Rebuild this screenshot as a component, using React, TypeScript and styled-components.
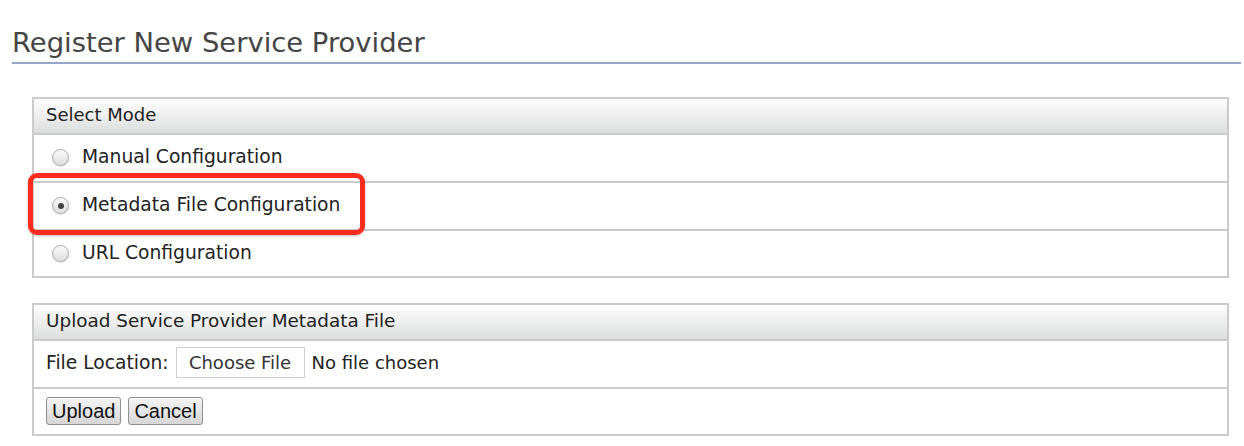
import React from "react";
import styled, { createGlobalStyle } from "styled-components";

const GlobalStyle = createGlobalStyle`
  html, body {
    margin: 0;
    padding: 0;
    background: #fff;
  }
  body {
    font-family: "DejaVu Sans", "Liberation Sans", sans-serif;
    color: #222;
  }
`;

const Page = styled.div`
  padding: 0 3px 0 12px;
`;

const Title = styled.h1`
  margin: 0;
  padding: 27px 0 4px 0;
  font-size: 27.4px;
  font-weight: normal;
  color: #454545;
  border-bottom: 2px solid #94a7c6;
  line-height: 31px;
`;

const Section = styled.div<{ $top: number }>`
  position: relative;
  margin: ${(p) => p.$top}px 12px 0 20px;
`;

const Table = styled.table`
  width: 100%;
  border-collapse: collapse;
  border: 2px solid #cbcbcb;
  font-size: 18.7px;
`;

const HeadCell = styled.th<{ $size: number }>`
  height: 31px;
  padding: 0 12px 3px 12px;
  text-align: left;
  font-weight: normal;
  font-size: ${(p) => p.$size}px;
  color: #222;
  background: linear-gradient(#fefefe, #dcdddd);
  border-bottom: 2px solid #cbcbcb;
`;

const Cell = styled.td<{ $h: number }>`
  height: ${(p) => p.$h}px;
  padding: 0 12px 3px 12px;
  border-top: 2px solid #cbcbcb;
  vertical-align: middle;
`;

const RadioLabel = styled.label`
  display: flex;
  align-items: center;
  gap: 13px;
  padding-left: 6px;
`;

const Radio = styled.span<{ $checked?: boolean }>`
  position: relative;
  width: 15px;
  height: 15px;
  margin-top: 2px;
  border-radius: 50%;
  border: 1px solid #a9a9a9;
  background: linear-gradient(#fbfbfb, #dedede);
  box-shadow: 0 1px 1px rgba(0, 0, 0, 0.12);
  flex: none;
  &::after {
    content: "";
    display: ${(p) => (p.$checked ? "block" : "none")};
    position: absolute;
    left: 4.5px;
    top: 4.5px;
    width: 6px;
    height: 6px;
    border-radius: 50%;
    background: #454545;
  }
`;

const Highlight = styled.div`
  position: absolute;
  left: -4px;
  top: 76px;
  width: 337px;
  height: 62px;
  box-sizing: border-box;
  border: 5px solid #fd2a1e;
  border-radius: 9px;
  box-shadow: 0 1px 3px rgba(0, 0, 0, 0.25);
  pointer-events: none;
`;

const FileRow = styled.div`
  display: flex;
  align-items: center;
  gap: 7px;
`;

const ChooseButton = styled.span`
  display: inline-flex;
  align-items: center;
  justify-content: center;
  width: 127px;
  height: 28px;
  padding-bottom: 1px;
  border: 1px solid #cfcfcf;
  background: #fff;
  color: #333;
  font-size: 18px;
`;

const FileName = styled.span`
  font-size: 18px;
`;

const Buttons = styled.div`
  display: flex;
  gap: 7px;
  padding-top: 2px;
`;

const Button = styled.button`
  font-family: "Liberation Sans", Arial, sans-serif;
  font-size: 20px;
  color: #111;
  height: 28px;
  padding: 0 5px;
  border: 1px solid #8e8e8e;
  border-radius: 3px;
  background: linear-gradient(#f4f4f4, #d6d6d6);
  box-shadow: inset 0 1px 0 #fff;
  line-height: 1;
`;

export default function App() {
  return (
    <Page>
      <GlobalStyle />
      <Title>Register New Service Provider</Title>

      <Section $top={33}>
        <Table>
          <thead>
            <tr>
              <HeadCell $size={18}>Select Mode</HeadCell>
            </tr>
          </thead>
          <tbody>
            <tr>
              <Cell $h={43}>
                <RadioLabel>
                  <Radio />
                  Manual Configuration
                </RadioLabel>
              </Cell>
            </tr>
            <tr>
              <Cell $h={43}>
                <RadioLabel>
                  <Radio $checked />
                  Metadata File Configuration
                </RadioLabel>
              </Cell>
            </tr>
            <tr>
              <Cell $h={42}>
                <RadioLabel>
                  <Radio />
                  URL Configuration
                </RadioLabel>
              </Cell>
            </tr>
          </tbody>
        </Table>
        <Highlight />
      </Section>

      <Section $top={25}>
        <Table>
          <thead>
            <tr>
              <HeadCell $size={18.4}>Upload Service Provider Metadata File</HeadCell>
            </tr>
          </thead>
          <tbody>
            <tr>
              <Cell $h={43}>
                <FileRow>
                  File Location:
                  <ChooseButton>Choose File</ChooseButton>
                  <FileName>No file chosen</FileName>
                </FileRow>
              </Cell>
            </tr>
            <tr>
              <Cell $h={42}>
                <Buttons>
                  <Button>Upload</Button>
                  <Button>Cancel</Button>
                </Buttons>
              </Cell>
            </tr>
          </tbody>
        </Table>
      </Section>
    </Page>
  );
}
